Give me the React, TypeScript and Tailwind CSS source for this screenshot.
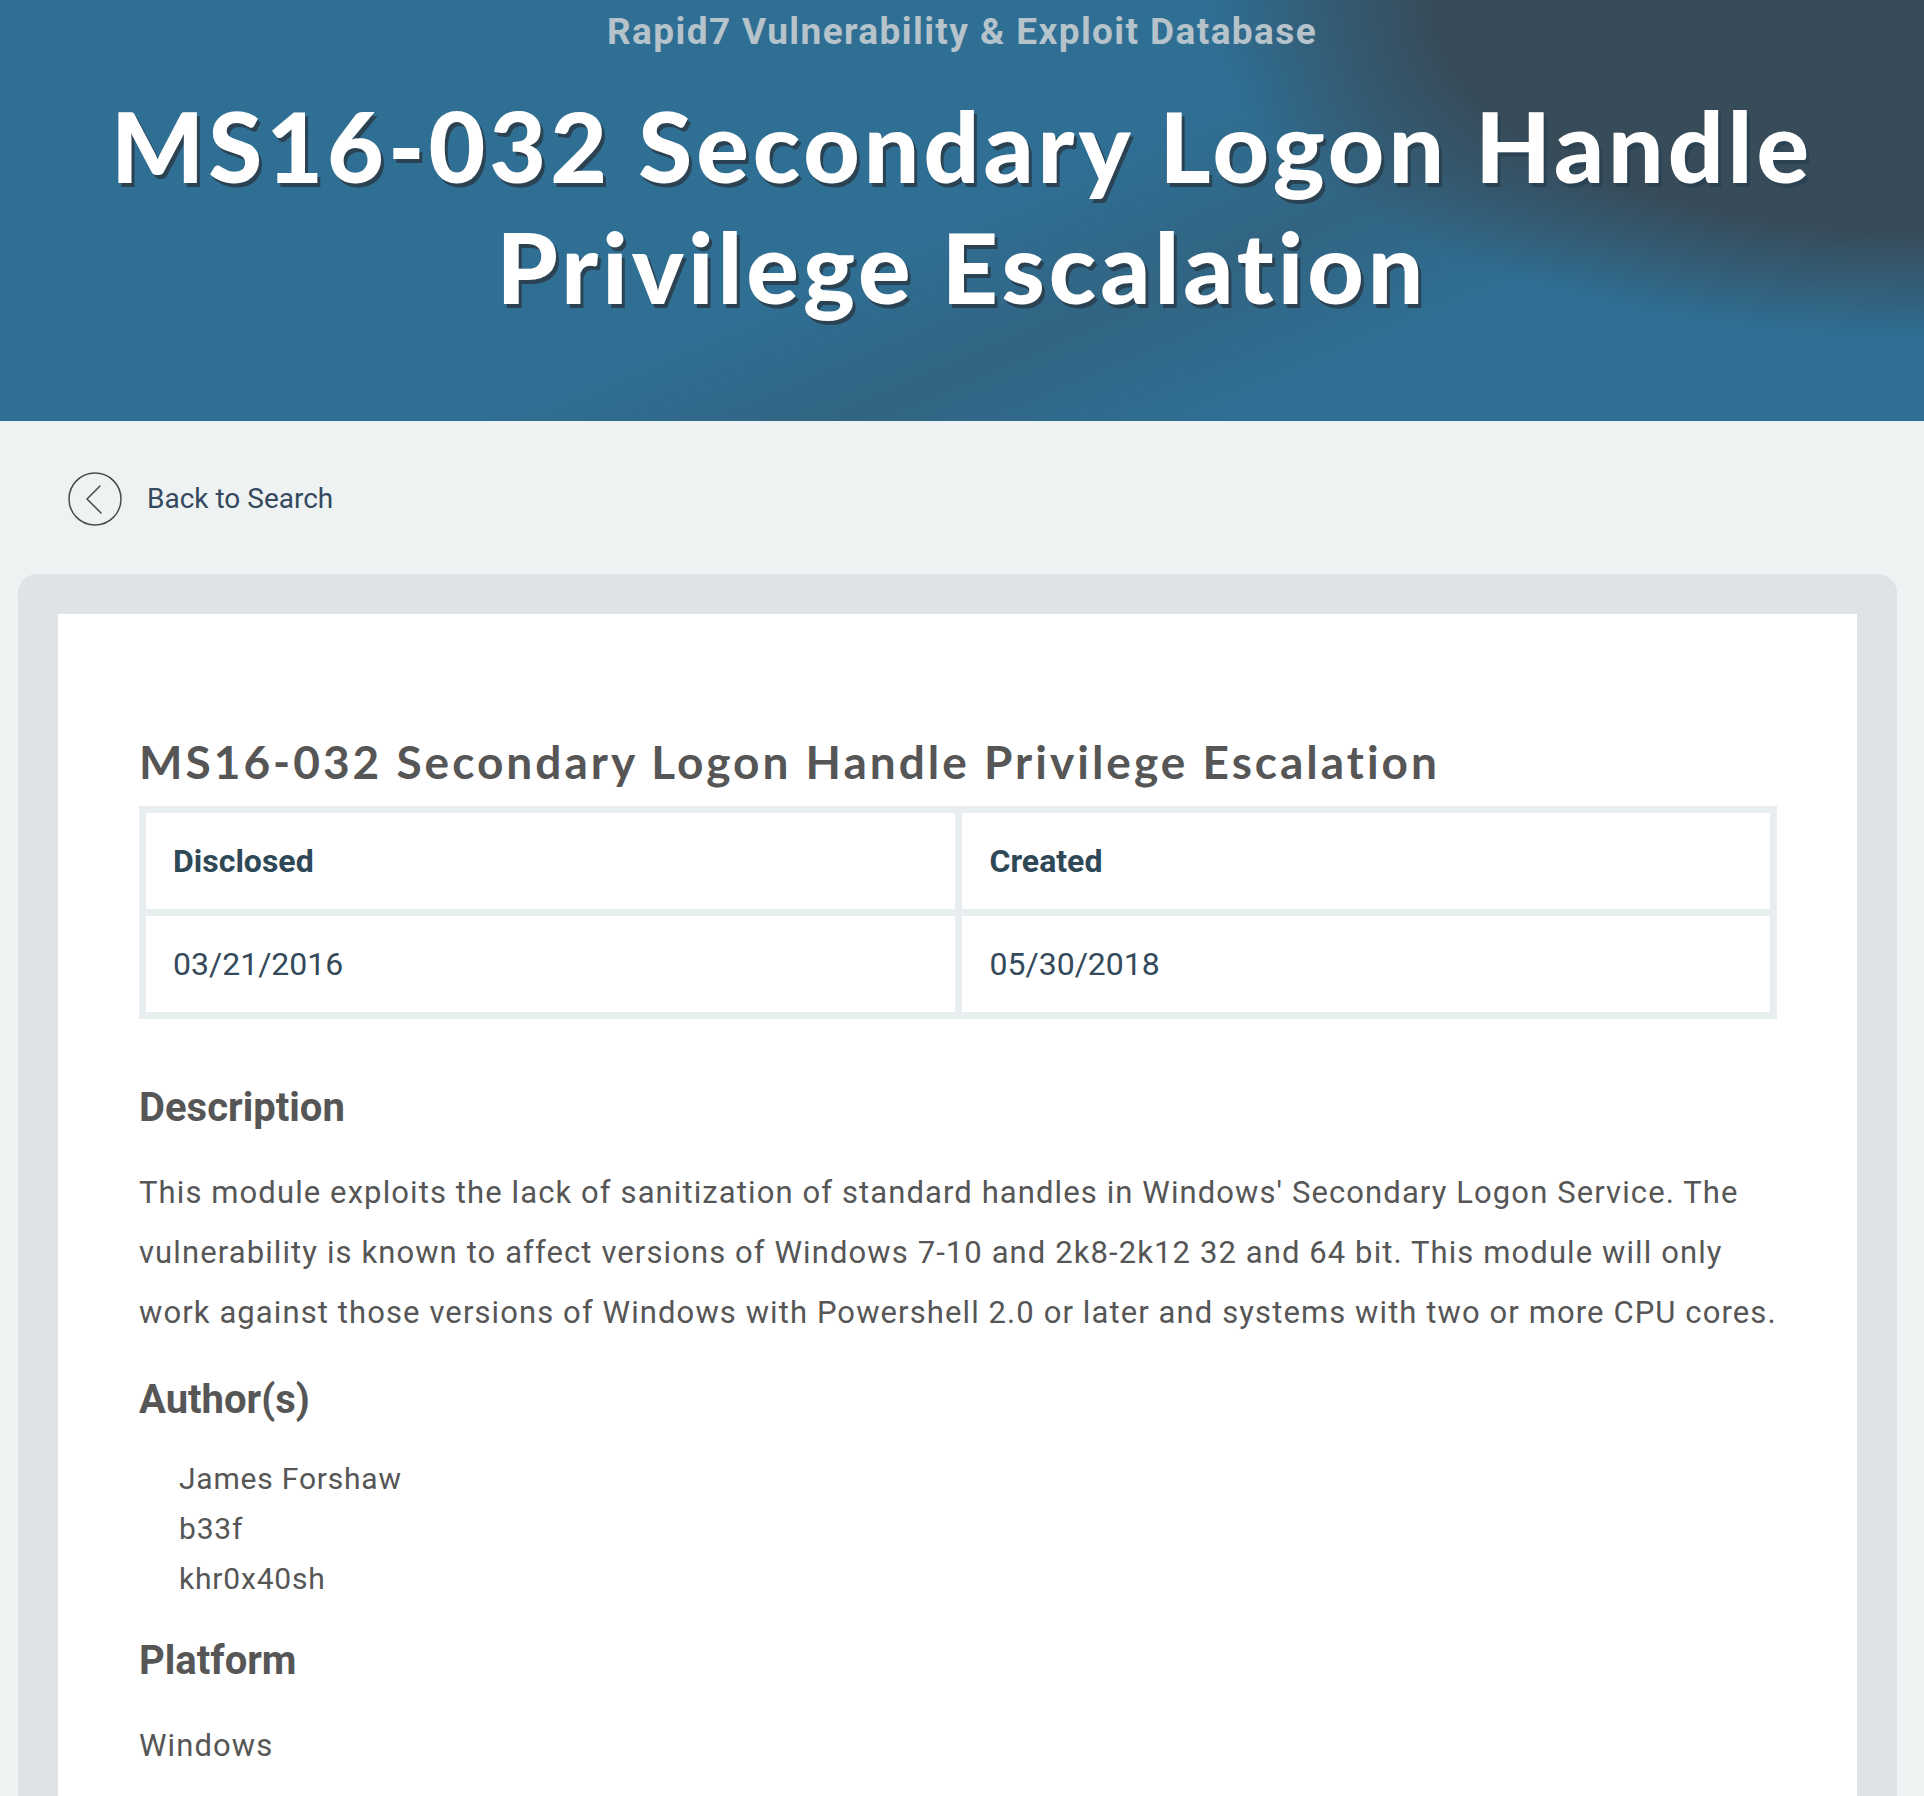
const authors = ["James Forshaw", "b33f", "khr0x40sh"]

const BackIcon = () => (
  <svg width="54" height="54" viewBox="0 0 54 54" fill="none">
    <circle cx="27" cy="27" r="26" stroke="#4a4a4a" strokeWidth="1.5" />
    <path d="M32 14 L19 27 L33 41" stroke="#4a4a4a" strokeWidth="1.5" strokeLinecap="round" strokeLinejoin="round" />
  </svg>
)

const App = () => {
  return (
    <div className="min-h-screen bg-[#eef2f3] font-['Roboto',sans-serif]">
      {/* Hero */}
      <header className="h-[421px] bg-[#2f6f94] [background-image:radial-gradient(ellipse_720px_340px_at_100%_0%,#374b59_0%,#374b59_68%,rgba(55,75,89,0)_100%),linear-gradient(157deg,rgba(55,75,89,0)_50%,rgba(55,75,89,0.3)_63%,rgba(55,75,89,0)_76%)] pt-[11px] text-center">
        <p className="text-[37px] leading-[42px] font-bold tracking-[1.4px] text-[#b6c3cb]">Rapid7 Vulnerability &amp; Exploit Database</p>
        <h1 className="mt-[32px] font-['Lato',sans-serif] text-[98px] leading-[121px] font-black tracking-[4px] text-white [text-shadow:3px_4px_0_#2b4252]">
          MS16-032 Secondary Logon Handle
          <br />
          Privilege Escalation
        </h1>
      </header>

      {/* Back link */}
      <div className="mt-[51px] ml-[68px] flex items-center gap-[25px]">
        <BackIcon />
        <span className="text-[28px] text-[#34495e]">Back to Search</span>
      </div>

      {/* Module card */}
      <div className="mt-[48px] ml-[18px] mr-[27px] rounded-t-[20px] border-x-[40px] border-t-[40px] border-[#dde3e6]">
        <div className="bg-white pt-[120px] pl-[81px] pr-[80px] pb-[60px] text-[#565656]">
          <h2 className="font-['Lato',sans-serif] text-[46px] leading-[56px] font-bold tracking-[3px]">
            MS16-032 Secondary Logon Handle Privilege Escalation
          </h2>

          <div className="mt-[16px] grid grid-cols-2 gap-[7px] border-[7px] border-[#e8edef] bg-[#e8edef]">
            <div className="flex h-[96px] items-center bg-white pl-[27px] text-[32px] font-bold text-[#2f4858]">Disclosed</div>
            <div className="flex h-[96px] items-center bg-white pl-[28px] text-[32px] font-bold text-[#2f4858]">Created</div>
            <div className="flex h-[96px] items-center bg-white pl-[27px] text-[32px] text-[#34495a]">03/21/2016</div>
            <div className="flex h-[96px] items-center bg-white pl-[28px] text-[32px] text-[#34495a]">05/30/2018</div>
          </div>

          <h3 className="mt-[66px] text-[40px] leading-[46px] font-bold">Description</h3>
          <p className="mt-[32px] text-[31px] leading-[60px] tracking-[1.1px]">
            This module exploits the lack of sanitization of standard handles in Windows' Secondary Logon Service. The vulnerability is known to affect versions of Windows 7-10 and 2k8-2k12 32 and 64 bit. This module will only work against those versions of Windows with Powershell 2.0 or later and systems with two or more CPU cores.
          </p>

          <h3 className="mt-[34px] text-[40px] leading-[46px] font-bold">Author(s)</h3>
          <ul className="mt-[31px] pl-[40px]">
            {authors.map((name) => (
              <li key={name} className="text-[30px] leading-[50px] tracking-[0.8px]">{name}</li>
            ))}
          </ul>

          <h3 className="mt-[34px] text-[40px] leading-[46px] font-bold">Platform</h3>
          <p className="mt-[32px] text-[31px] leading-[60px] tracking-[1.1px]">Windows</p>
        </div>
      </div>
    </div>
  )
}

export default App
